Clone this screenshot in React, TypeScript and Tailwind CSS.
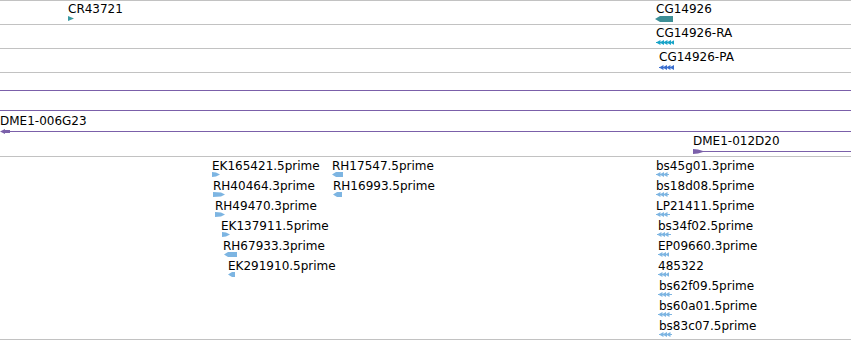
import React from "react";

type Kind = "triR" | "solidL" | "featherL" | "estR" | "estL";

type Feat = {
  label: string;
  x: number;
  gx: number;
  kind: Kind;
  w: number;
  color: string;
};

const geneRows: Feat[][] = [
  [
    { label: "CR43721", x: 68, gx: 68, kind: "triR", w: 6, color: "#3a9aa2" },
    { label: "CG14926", x: 656, gx: 655, kind: "solidL", w: 18, color: "#3d8f96" },
  ],
  [{ label: "CG14926-RA", x: 656, gx: 656, kind: "featherL", w: 18, color: "#18a4c8" }],
  [{ label: "CG14926-PA", x: 659, gx: 659, kind: "featherL", w: 15, color: "#3b6fcf" }],
];

const EST = "#7db5e2";

const estRows: Feat[][] = [
  [
    { label: "EK165421.5prime", x: 212, gx: 212, kind: "estR", w: 8, color: EST },
    { label: "RH17547.5prime", x: 332, gx: 332, kind: "estL", w: 11, color: EST },
    { label: "bs45g01.3prime", x: 656, gx: 656, kind: "featherL", w: 13, color: EST },
  ],
  [
    { label: "RH40464.3prime", x: 213, gx: 213, kind: "estR", w: 12, color: EST },
    { label: "RH16993.5prime", x: 333, gx: 333, kind: "estL", w: 9, color: EST },
    { label: "bs18d08.5prime", x: 656, gx: 656, kind: "featherL", w: 13, color: EST },
  ],
  [
    { label: "RH49470.3prime", x: 215, gx: 215, kind: "estR", w: 10, color: EST },
    { label: "LP21411.5prime", x: 656, gx: 656, kind: "featherL", w: 14, color: EST },
  ],
  [
    { label: "EK137911.5prime", x: 221, gx: 222, kind: "estR", w: 8, color: EST },
    { label: "bs34f02.5prime", x: 658, gx: 657, kind: "featherL", w: 14, color: EST },
  ],
  [
    { label: "RH67933.3prime", x: 223, gx: 224, kind: "estL", w: 13, color: EST },
    { label: "EP09660.3prime", x: 658, gx: 658, kind: "featherL", w: 11, color: EST },
  ],
  [
    { label: "EK291910.5prime", x: 228, gx: 228, kind: "estL", w: 7, color: EST },
    { label: "485322", x: 658, gx: 658, kind: "featherL", w: 11, color: EST },
  ],
  [{ label: "bs62f09.5prime", x: 659, gx: 658, kind: "featherL", w: 14, color: EST }],
  [{ label: "bs60a01.5prime", x: 659, gx: 658, kind: "featherL", w: 14, color: EST }],
  [{ label: "bs83c07.5prime", x: 659, gx: 659, kind: "featherL", w: 13, color: EST }],
];

const PURPLE = "#7b60aa";

function Glyph({ kind, w, color }: { kind: Kind; w: number; color: string }) {
  let shape: React.ReactNode = null;
  if (kind === "triR") shape = <polygon points={`0,0 ${w},2.5 0,5`} fill={color} />;
  if (kind === "solidL") shape = <polygon points={`0,3 5,0 ${w},0 ${w},6 5,6`} fill={color} />;
  if (kind === "estR")
    shape = <polygon points={`0,0 ${w - 4},0.5 ${w},2.5 ${w - 4},4.5 0,5`} fill={color} />;
  if (kind === "estL") shape = <polygon points={`0,2.5 4,0 ${w},0 ${w},5 4,5`} fill={color} />;
  if (kind === "featherL") {
    const heads = [];
    for (let x = 0; x + 4.5 <= w + 0.5; x += 3.5) {
      heads.push(<polygon key={x} points={`${x},2.5 ${x + 4.5},0 ${x + 4.5},5`} fill={color} />);
    }
    shape = (
      <>
        <rect x={0} y={2} width={w} height={1} fill={color} />
        {heads}
      </>
    );
  }
  return (
    <svg width={w} height={kind === "solidL" ? 6 : 5} className="block">
      {shape}
    </svg>
  );
}

// one feature on the track canvas: label over its glyph
function Feature({ f, top, gap }: { f: Feat; top: string; gap: string }) {
  return (
    <div className={`absolute ${top} flex flex-col items-start`} style={{ left: f.x }}>
      <span className="h-[12px] whitespace-nowrap text-[12px] leading-none text-black">{f.label}</span>
      <div className={gap} style={{ marginLeft: f.gx - f.x }}>
        <Glyph kind={f.kind} w={f.w} color={f.color} />
      </div>
    </div>
  );
}

function CloneArrow({ dir }: { dir: "L" | "R" }) {
  return (
    <svg width={10} height={5} className="block shrink-0">
      {dir === "L" ? (
        <polygon points="0,2.5 5,0 5,1 10,1 10,4 5,4 5,5" fill={PURPLE} />
      ) : (
        <polygon points="0,0 5,0.5 10,2 10,3 5,4.5 0,5" fill={PURPLE} />
      )}
    </svg>
  );
}

function CloneRow({ label, left, dir }: { label?: string; left?: string; dir?: "L" | "R" }) {
  return (
    <div className={`h-[20px] pt-[2px] flex flex-col ${left ?? ""}`}>
      <span className="h-[12px] whitespace-nowrap text-[12px] leading-none text-black">{label}</span>
      <div className="mt-[2px] h-[5px] flex items-center">
        {dir && <CloneArrow dir={dir} />}
        <div className="flex-1 h-px bg-[#7b60aa]" />
      </div>
    </div>
  );
}

export default function App() {
  return (
    <div className="w-[851px] h-[340px] overflow-hidden bg-white font-['DejaVu_Sans',sans-serif]">
      {/* gene models */}
      <div className="border-t border-[#c2c2c2]">
        {geneRows.map((row, i) => (
          <div key={i} className="relative h-[24px] border-b border-[#c2c2c2]">
            {row.map((f) => (
              <Feature key={f.label} f={f} top="top-[2px]" gap={i === 2 ? "mt-[2px]" : "mt-px"} />
            ))}
          </div>
        ))}
      </div>

      {/* clones */}
      <div className="flex flex-col pb-[3px] border-b border-[#c2c2c2]">
        <CloneRow />
        <CloneRow />
        <CloneRow label="DME1-006G23" dir="L" />
        <CloneRow label="DME1-012D20" left="ml-[693px]" dir="R" />
      </div>

      {/* ESTs */}
      <div className="pb-[2px] border-b border-[#c2c2c2]">
        {estRows.map((row, i) => (
          <div key={i} className="relative h-[20px]">
            {row.map((f) => (
              <Feature key={f.label} f={f} top="top-[3px]" gap="mt-0" />
            ))}
          </div>
        ))}
      </div>
    </div>
  );
}
